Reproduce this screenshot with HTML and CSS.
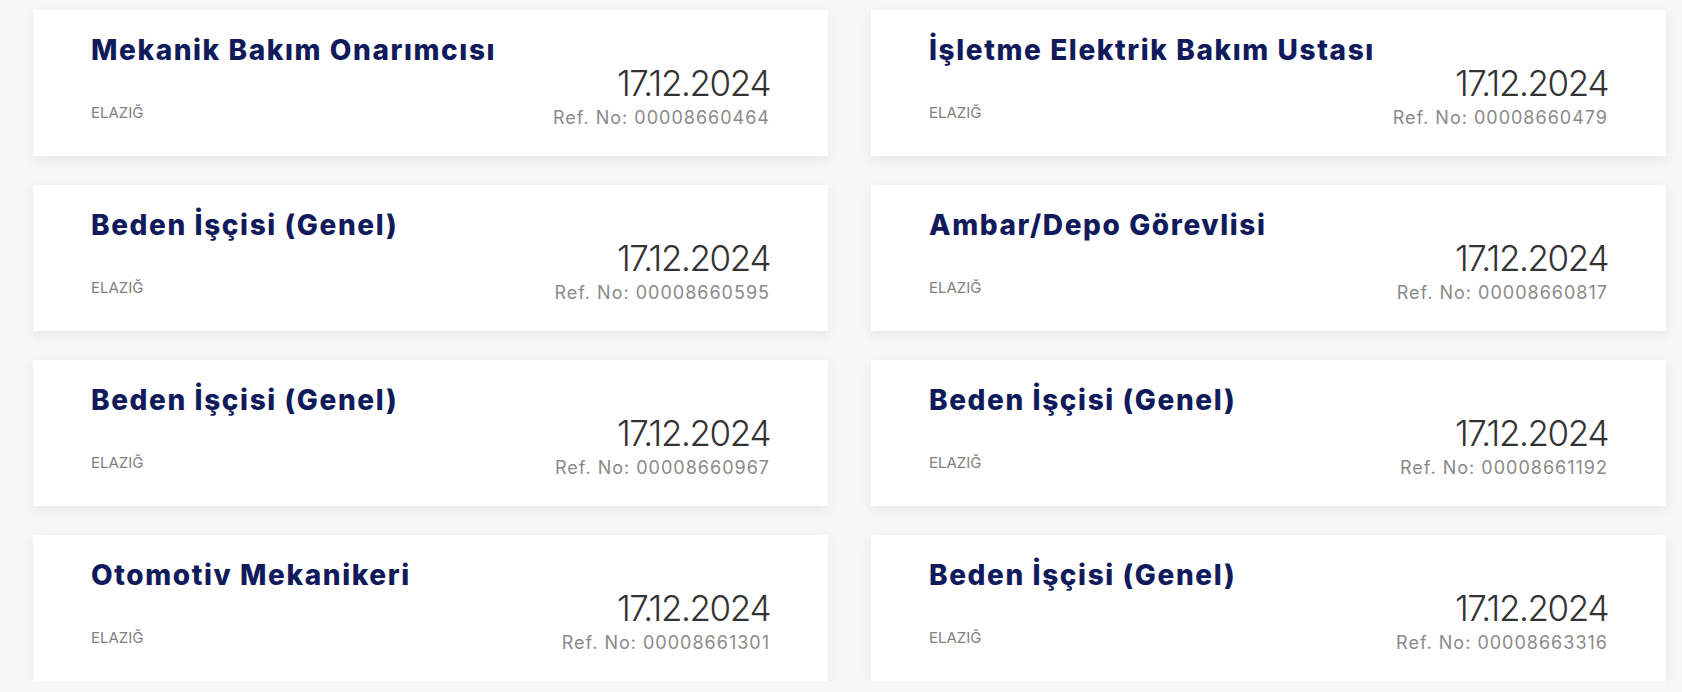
FILE: index.html
```html
<!DOCTYPE html>
<html lang="tr">
<head>
    <meta charset="UTF-8">
    <meta name="viewport" content="width=device-width, initial-scale=1.0">
    <title>İş İlanları</title>
    <link rel="stylesheet" href="styles.css">
</head>
<body>
    <div class="job-list">
        <div class="job-card">
            <div class="job-info">
                <h2 class="job-title">Mekanik Bakım Onarımcısı</h2>
                <span class="job-city">ELAZIĞ</span>
            </div>
            <div class="job-meta">
                <div class="job-date">17.12.2024</div>
                <div class="job-ref">Ref. No: 00008660464</div>
            </div>
        </div>
        <div class="job-card">
            <div class="job-info">
                <h2 class="job-title">İşletme Elektrik Bakım Ustası</h2>
                <span class="job-city">ELAZIĞ</span>
            </div>
            <div class="job-meta">
                <div class="job-date">17.12.2024</div>
                <div class="job-ref">Ref. No: 00008660479</div>
            </div>
        </div>
        <div class="job-card">
            <div class="job-info">
                <h2 class="job-title">Beden İşçisi (Genel)</h2>
                <span class="job-city">ELAZIĞ</span>
            </div>
            <div class="job-meta">
                <div class="job-date">17.12.2024</div>
                <div class="job-ref">Ref. No: 00008660595</div>
            </div>
        </div>
        <div class="job-card">
            <div class="job-info">
                <h2 class="job-title">Ambar/Depo Görevlisi</h2>
                <span class="job-city">ELAZIĞ</span>
            </div>
            <div class="job-meta">
                <div class="job-date">17.12.2024</div>
                <div class="job-ref">Ref. No: 00008660817</div>
            </div>
        </div>
        <div class="job-card">
            <div class="job-info">
                <h2 class="job-title">Beden İşçisi (Genel)</h2>
                <span class="job-city">ELAZIĞ</span>
            </div>
            <div class="job-meta">
                <div class="job-date">17.12.2024</div>
                <div class="job-ref">Ref. No: 00008660967</div>
            </div>
        </div>
        <div class="job-card">
            <div class="job-info">
                <h2 class="job-title">Beden İşçisi (Genel)</h2>
                <span class="job-city">ELAZIĞ</span>
            </div>
            <div class="job-meta">
                <div class="job-date">17.12.2024</div>
                <div class="job-ref">Ref. No: 00008661192</div>
            </div>
        </div>
        <div class="job-card">
            <div class="job-info">
                <h2 class="job-title">Otomotiv Mekanikeri</h2>
                <span class="job-city">ELAZIĞ</span>
            </div>
            <div class="job-meta">
                <div class="job-date">17.12.2024</div>
                <div class="job-ref">Ref. No: 00008661301</div>
            </div>
        </div>
        <div class="job-card">
            <div class="job-info">
                <h2 class="job-title">Beden İşçisi (Genel)</h2>
                <span class="job-city">ELAZIĞ</span>
            </div>
            <div class="job-meta">
                <div class="job-date">17.12.2024</div>
                <div class="job-ref">Ref. No: 00008663316</div>
            </div>
        </div>
    </div>
</body>
</html>
```

FILE: styles.css
```css
* {
    box-sizing: border-box;
}
body {
    font-family: Inter, "Noto Sans", Arial, sans-serif;
    margin: 0;
    padding: 0;
    background-color: #f7f7f7;
    overflow: hidden;
}
.job-list {
    display: grid;
    grid-template-columns: 795px 795px;
    column-gap: 43px;
    row-gap: 29px;
    padding: 10px 16px 0 33px;
}
.job-card {
    height: 146px;
    background-color: white;
    padding: 23px 58px 26px 58px;
    box-shadow: 0px 4px 12px rgba(0, 0, 0, 0.07);
    display: flex;
    justify-content: space-between;
    align-items: flex-end;
}
.job-info {
    align-self: stretch;
    display: flex;
    flex-direction: column;
    justify-content: space-between;
    align-items: flex-start;
}
.job-title {
    margin: 0;
    font-size: 28px;
    line-height: 34px;
    font-weight: 800;
    color: #111a5b;
    letter-spacing: 1.6px;
}
.job-city {
    font-size: 15px;
    line-height: 20px;
    color: #808080;
    margin-bottom: 7px;
}
.job-meta {
    text-align: right;
}
.job-date {
    font-size: 35px;
    line-height: 40px;
    font-weight: 300;
    color: #333;
    letter-spacing: -1.4px;
    margin-bottom: 3px;
}
.job-ref {
    font-size: 18px;
    line-height: 24px;
    color: #8a8a8a;
    letter-spacing: 1px;
}
```
